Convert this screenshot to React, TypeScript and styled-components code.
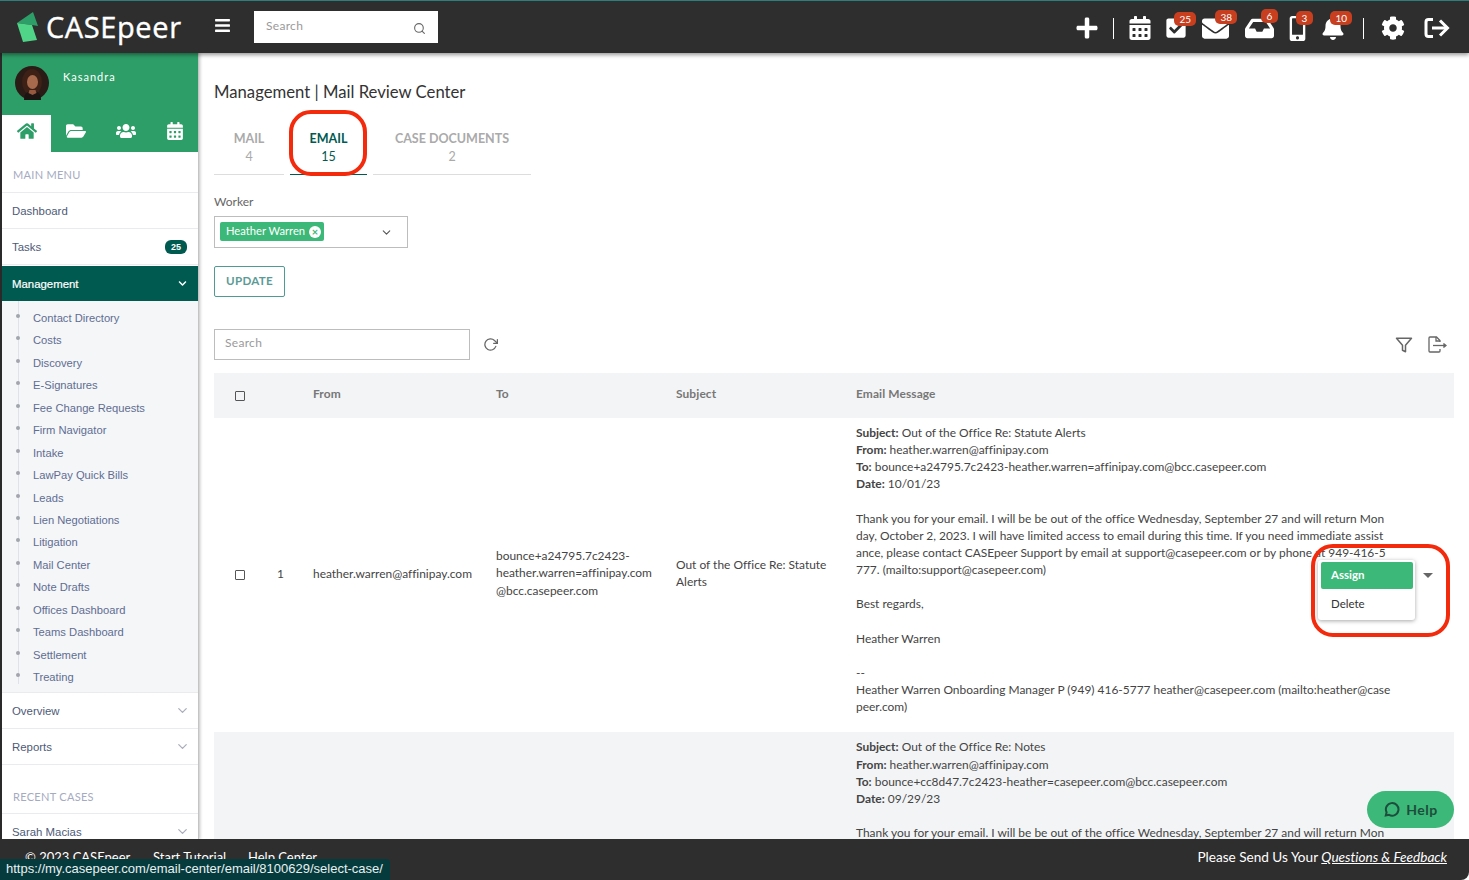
import React from 'react';
import styled, { createGlobalStyle } from 'styled-components';
import {
  FaBars,
  FaBell,
  FaCalendarAlt,
  FaCheckSquare,
  FaChevronDown,
  FaCog,
  FaEnvelope,
  FaFolderOpen,
  FaHome,
  FaInbox,
  FaMobileAlt,
  FaPlus,
  FaUsers,
} from 'react-icons/fa';
import { FiChevronDown, FiFilter, FiRotateCw, FiSearch } from 'react-icons/fi';

const GlobalStyle = createGlobalStyle`
  html, body {
    margin: 0;
    height: 100%;
    overflow: hidden;
    background: #fff;
  }
  * { box-sizing: border-box; }
`;

const BODY_FONT = "Lato, 'Noto Sans', sans-serif";
const MENU_FONT = "'Liberation Sans', Arial, sans-serif";

const Page = styled.div`
  position: relative;
  width: 1469px;
  height: 880px;
  display: flex;
  flex-direction: column;
  overflow: hidden;
  font-family: ${BODY_FONT};
  font-variant-ligatures: none;
  color: #333;
`;

const TopBar = styled.header`
  flex: 0 0 53px;
  display: flex;
  align-items: center;
  background: #2e2e2e;
  border-top: 1px solid #2c7f7c;
  box-shadow: 0 2px 4px rgba(0, 0, 0, 0.4);
  position: relative;
  z-index: 3;
  padding-right: 10px;
`;

const Brand = styled.div`
  display: flex;
  align-items: center;
  width: 214px;
  padding-left: 16px;
`;

const BrandName = styled.span`
  margin: -2px 0 0 6px;
  color: #fff;
  font-size: 29px;
  letter-spacing: 0.6px;
  font-weight: 400;
  font-family: 'Open Sans', sans-serif;
  -webkit-text-stroke: 0.4px #fff;
`;

const MenuToggle = styled.div`
  width: 40px;
  display: flex;
  color: #fff;
  font-size: 17px;
  margin-top: -4px;
`;

const TopSearch = styled.div`
  width: 184px;
  height: 32px;
  background: #fff;
  display: flex;
  align-items: center;
  justify-content: space-between;
  padding: 0 12px 4px;
  font-size: 12px;
  color: #9a9a9a;
  letter-spacing: 0.3px;

  svg {
    color: #666;
    font-size: 13px;
    margin-top: 7px;
  }
`;

const TopIcons = styled.nav`
  margin-left: auto;
  display: flex;
  align-items: center;
  height: 100%;
`;

const IconSlot = styled.div<{ $w: number; $size: number }>`
  position: relative;
  width: ${({ $w }) => $w}px;
  display: flex;
  justify-content: center;
  color: #fff;
  font-size: ${({ $size }) => $size}px;
  margin-top: 2px;
`;

const TopDivider = styled.div`
  width: 1px;
  height: 21px;
  background: #fff;
`;

const Badge = styled.span<{ $right: number }>`
  position: absolute;
  top: -5px;
  right: ${({ $right }) => $right}px;
  min-width: 17px;
  height: 14px;
  padding: 0 5px;
  border-radius: 5px;
  background: #c83f20;
  color: #fff;
  font-size: 10px;
  line-height: 14px;
  text-align: center;
`;

const Body = styled.div`
  flex: 1;
  display: flex;
  min-height: 0;
`;

const Sidebar = styled.aside`
  flex: 0 0 199px;
  border-left: 2px solid #2a2a2a;
  border-right: 1px solid #c4c4c4;
  box-shadow: 1px 0 3px rgba(0, 0, 0, 0.25);
  background: #fff;
  display: flex;
  flex-direction: column;
  overflow: hidden;
  position: relative;
  z-index: 2;

  & > * {
    flex-shrink: 0;
  }
`;

const Profile = styled.div`
  background: #2e9e68;
  height: 62px;
  display: flex;
  padding: 13px 0 0 13px;
`;

const ProfileName = styled.span`
  margin: 4px 0 0 14px;
  color: #fff;
  font-size: 11px;
  letter-spacing: 1px;
`;

const SideTabs = styled.div`
  display: grid;
  grid-template-columns: 49px 49px 52px 1fr;
  height: 37px;
  background: #2e9e68;
`;

const SideTab = styled.div<{ $active?: boolean; $size?: number }>`
  display: flex;
  align-items: center;
  justify-content: center;
  padding-bottom: 6px;
  font-size: ${({ $size }) => $size ?? 20}px;
  color: ${({ $active }) => ($active ? '#2e9e68' : '#fff')};
  background: ${({ $active }) => ($active ? '#fff' : 'transparent')};
`;

const SectionTitle = styled.div<{ $top: number; $h: number }>`
  padding: ${({ $top }) => $top}px 0 0 11px;
  height: ${({ $h }) => $h}px;
  font-size: 11px;
  letter-spacing: 0.3px;
  color: #a4abc0;
  border-bottom: 1px solid #e9ebee;
`;

const MenuRow = styled.div`
  height: 36px;
  display: flex;
  align-items: center;
  justify-content: space-between;
  padding: 0 11px 0 10px;
  font-family: ${MENU_FONT};
  font-size: 11.4px;
  color: #4d5a78;
  border-bottom: 1px solid #e9ebee;

  svg {
    color: #a9aebb;
    font-size: 15px;
    margin-right: -3px;
  }
`;

const TaskCount = styled.span`
  background: #005a50;
  color: #fff;
  border-radius: 6px;
  padding: 0 6px;
  height: 14px;
  line-height: 14px;
  font-size: 9px;
  font-weight: 700;
`;

const ActiveRow = styled.div`
  height: 35px;
  margin-top: 1px;
  position: relative;
  background: #005a50;
  color: #fff;
  display: flex;
  align-items: center;
  justify-content: space-between;
  padding: 0 11px 0 10px;
  font-family: ${MENU_FONT};
  font-size: 11.4px;
  -webkit-text-stroke: 0.2px #fff;

  svg {
    font-size: 9px;
  }

  &::after {
    content: '';
    position: absolute;
    left: 11px;
    bottom: -5px;
    border-left: 5px solid transparent;
    border-right: 5px solid transparent;
    border-top: 5px solid #2e9e68;
  }
`;

const SubMenu = styled.ul`
  list-style: none;
  margin: 0;
  padding: 6px 0 5px;
  height: 392px;
  background: #f5f6f8;
  border-bottom: 1px solid #e9ebee;
  position: relative;

  &::before {
    content: '';
    position: absolute;
    left: 16px;
    top: 0;
    bottom: 8px;
    width: 1px;
    background: #dfe2ea;
  }
`;

const SubItem = styled.li`
  position: relative;
  height: 22.45px;
  line-height: 22.45px;
  padding-left: 31px;
  font-family: ${MENU_FONT};
  font-size: 11.2px;
  color: #606d92;

  &::before {
    content: '';
    position: absolute;
    left: 14px;
    top: 7px;
    width: 4px;
    height: 4px;
    border-radius: 50%;
    background: #a2a5ad;
  }
`;

const Main = styled.main`
  flex: 1;
  min-width: 0;
  padding: 0 15px;
  overflow: hidden;
  background: #fff;
`;

const PageTitle = styled.h1`
  margin: 29px 0 0;
  font-size: 16.7px;
  line-height: 20px;
  font-weight: 400;
  color: #333;
`;

const Tabs = styled.div`
  display: flex;
  gap: 6px;
  margin-top: 18px;
`;

const Tab = styled.div<{ $w: number; $active?: boolean }>`
  width: ${({ $w }) => $w}px;
  height: 55px;
  padding-top: 10px;
  text-align: center;
  font-size: 12.5px;
  line-height: 18px;
  color: ${({ $active }) => ($active ? '#005a50' : '#aaa')};
  border-bottom: 1px solid ${({ $active }) => ($active ? '#005a50' : '#ddd')};

  b {
    display: block;
    font-weight: 700;
  }
`;

const FieldLabel = styled.label`
  display: block;
  margin-top: 19px;
  font-size: 12px;
  line-height: 15px;
  color: #666;
`;

const SelectBox = styled.div`
  margin-top: 7px;
  width: 194px;
  height: 32px;
  border: 1px solid #bdbdbd;
  display: flex;
  align-items: center;
  justify-content: space-between;
  padding: 0 14px 0 5px;
  color: #555;
  font-size: 13px;
`;

const Chip = styled.span`
  display: inline-flex;
  align-items: center;
  gap: 4px;
  height: 19px;
  width: 104px;
  padding: 0 0 2px 6px;
  margin-top: -1px;
  background: #3cb878;
  border-radius: 2px;
  color: #fff;
  font-size: 11.2px;
`;

const ChipClose = styled.span`
  width: 12px;
  height: 12px;
  margin-top: 2px;
  border-radius: 50%;
  background: #fff;
  color: #3cb878;
  font-size: 11px;
  font-weight: 700;
  line-height: 11px;
  text-align: center;
`;

const UpdateButton = styled.button`
  display: block;
  margin-top: 18px;
  width: 71px;
  height: 31px;
  padding: 0 0 2px;
  border: 1px solid #4f9a94;
  border-radius: 2px;
  background: #fff;
  color: #5b9b96;
  font-family: ${BODY_FONT};
  font-size: 11.6px;
  font-weight: 700;
  letter-spacing: 0.3px;
`;

const Toolbar = styled.div`
  display: flex;
  align-items: center;
  margin-top: 32px;
  height: 31px;
  color: #666;
`;

const SearchBox = styled.div`
  width: 256px;
  height: 31px;
  border: 1px solid #bdbdbd;
  padding: 0 10px;
  line-height: 26px;
  font-size: 12px;
  letter-spacing: 0.3px;
  color: #9a9a9a;
`;

const RefreshIcon = styled(FiRotateCw)`
  margin-left: 13px;
  font-size: 15px;
`;

const ToolIcons = styled.div`
  margin-left: auto;
  display: flex;
  align-items: center;
  gap: 15px;
  padding-right: 7px;
  font-size: 18px;
`;

const Row = styled.div<{ $shade?: boolean }>`
  position: relative;
  display: grid;
  grid-template-columns: 52px 47px 183px 180px 180px 1fr;
  align-items: center;
  background: ${({ $shade }) => ($shade ? '#f3f4f6' : '#fff')};
  font-size: 11.95px;
`;

const HeadRow = styled(Row)`
  margin-top: 13px;
  height: 45px;
  background: #f3f4f6;
`;

const HeadLabel = styled.span`
  margin-bottom: 5px;
  color: #777;
  font-weight: 700;
  letter-spacing: 0.1px;
`;

const CheckCell = styled.div`
  display: flex;
  justify-content: center;
`;

const Check = styled.span`
  width: 10px;
  height: 10px;
  border: 1px solid #555;
  border-radius: 1px;
`;

const Cell = styled.div<{ $lh?: number }>`
  margin-bottom: 4px;
  line-height: ${({ $lh }) => $lh ?? 17}px;
  color: #444;
`;

const IndexCell = styled(Cell)`
  padding-left: 11px;
`;

const Message = styled.div`
  padding: 6px 0 17px;
  line-height: 17.14px;
  white-space: pre;
  color: #444;

  b {
    font-weight: 700;
  }
`;

const ActionMenu = styled.div`
  position: absolute;
  left: 1104px;
  top: 142px;
  width: 97px;
  height: 60px;
  padding: 2px 2px 0 3px;
  background: #fff;
  border-radius: 3px;
  box-shadow: 0 1px 4px rgba(0, 0, 0, 0.35);
`;

const MenuAssign = styled.div`
  height: 27px;
  padding-left: 10px;
  line-height: 26px;
  background: #3cb878;
  border-radius: 2px;
  color: #fff;
  font-weight: 700;
  font-size: 11.5px;
`;

const MenuDelete = styled.div`
  padding: 8px 0 0 10px;
  font-size: 11.5px;
  color: #333;
`;

const ActionCaret = styled.span`
  position: absolute;
  left: 1209px;
  top: 155px;
  border-left: 5px solid transparent;
  border-right: 5px solid transparent;
  border-top: 5px solid #666;
`;

const Footer = styled.footer`
  flex: 0 0 41px;
  background: #2e2e2e;
  color: #fff;
  display: flex;
  align-items: flex-start;
  padding: 10px 22px 0 25px;
  font-size: 13px;
  line-height: 16px;
  border-bottom-right-radius: 8px;
  position: relative;
  z-index: 3;
`;

const FooterLink = styled.span<{ $w: number }>`
  width: ${({ $w }) => $w}px;
`;

const Feedback = styled.span`
  margin-left: auto;
  font-size: 13.6px;

  a {
    color: #fff;
    font-style: italic;
    text-decoration: underline;
  }
`;

const StatusUrl = styled.div`
  position: absolute;
  left: 0;
  bottom: 0;
  z-index: 5;
  width: 390px;
  height: 21px;
  padding-left: 6px;
  background: #063b3e;
  border-top-right-radius: 4px;
  color: #e8f0f0;
  font-family: ${MENU_FONT};
  font-size: 13px;
  line-height: 20px;
  white-space: nowrap;
`;

const HelpButton = styled.div`
  position: absolute;
  left: 1367px;
  top: 791px;
  z-index: 2;
  width: 87px;
  height: 37px;
  border-radius: 19px;
  background: #3cb878;
  color: #1d4d3c;
  display: flex;
  align-items: center;
  justify-content: center;
  gap: 6px;
  font-size: 14px;
  font-weight: 700;
  letter-spacing: 0.5px;
`;

const Callout = styled.div<{ $x: number; $y: number; $w: number; $h: number }>`
  position: absolute;
  left: ${({ $x }) => $x}px;
  top: ${({ $y }) => $y}px;
  width: ${({ $w }) => $w}px;
  height: ${({ $h }) => $h}px;
  border: 4px solid #f32a0c;
  border-radius: 22px;
  z-index: 4;
`;

const Logo = () => (
  <svg width="24" height="32" viewBox="0 0 24 32">
    <polygon points="1,12 17,1 22,15 16,14" fill="#2e9e68" />
    <polygon points="1,12 16,14 21,29 7,31" fill="#4fd488" />
  </svg>
);

const Avatar = () => (
  <svg width="34" height="34" viewBox="0 0 34 34">
    <circle cx="17" cy="17" r="17" fill="#2a1b17" />
    <ellipse cx="17" cy="16" rx="10" ry="13" fill="#3d2016" />
    <ellipse cx="17.5" cy="16" rx="5.5" ry="7" fill="#a86a4c" />
    <path d="M9 34c0-7 4-9 8.500-9s8.500 2 8.500 9z" fill="#1a1412" />
    <path d="M14.500 24h6l1 3-4 2-4-2z" fill="#94593e" />
  </svg>
);

const SignOut = () => (
  <svg width="27" height="24" viewBox="0 0 27 24" fill="none" stroke="#fff" strokeWidth="3">
    <path d="M9 3.500H4.500a2.500 2.500 0 0 0-2.500 2.500v12a2.500 2.500 0 0 0 2.500 2.500H9" />
    <path d="M8 12h14" />
    <path d="M16 4.500l7.500 7.500-7.500 7.500" />
  </svg>
);

const ExportFile = () => (
  <svg width="19" height="17" viewBox="0 0 19 17" fill="none" stroke="#666" strokeWidth="1.300">
    <path d="M12 6V4.500L8.500 1H2a1 1 0 0 0-1 1v13a1 1 0 0 0 1 1h9a1 1 0 0 0 1-1v-2" />
    <path d="M8 1v4h4" />
    <path d="M5 9.500h12" />
    <path d="M15.500 7.500l2.500 2-2.500 2" fill="#666" />
  </svg>
);

const HelpBubble = () => (
  <svg width="17" height="17" viewBox="0 0 17 17" fill="none" stroke="#1d4d3c" strokeWidth="2">
    <path d="M2.800 14.500l.8-3.200A6.300 6.300 0 1 1 6 13.800z" />
  </svg>
);

const subMenu = [
  'Contact Directory',
  'Costs',
  'Discovery',
  'E-Signatures',
  'Fee Change Requests',
  'Firm Navigator',
  'Intake',
  'LawPay Quick Bills',
  'Leads',
  'Lien Negotiations',
  'Litigation',
  'Mail Center',
  'Note Drafts',
  'Offices Dashboard',
  'Teams Dashboard',
  'Settlement',
  'Treating',
];

const topIcons = [
  { w: 32, size: 24, icon: <FaPlus /> },
  { w: 20, size: 24, icon: <TopDivider /> },
  { w: 34, size: 24, icon: <FaCalendarAlt /> },
  { w: 38, size: 22, icon: <FaCheckSquare />, badge: '25', right: -1 },
  { w: 40, size: 27, icon: <FaEnvelope />, badge: '38', right: -2 },
  { w: 48, size: 29, icon: <FaInbox />, badge: '6', right: 5 },
  { w: 28, size: 25, icon: <FaMobileAlt />, badge: '3', right: -2 },
  { w: 44, size: 24, icon: <FaBell />, badge: '10', right: 3 },
  { w: 16, size: 24, icon: <TopDivider /> },
  { w: 44, size: 24, icon: <FaCog /> },
  { w: 44, size: 24, icon: <SignOut /> },
];

const App: React.FC = () => (
  <Page>
    <GlobalStyle />
    <TopBar>
      <Brand>
        <Logo />
        <BrandName>CASEpeer</BrandName>
      </Brand>
      <MenuToggle>
        <FaBars />
      </MenuToggle>
      <TopSearch>
        Search
        <FiSearch />
      </TopSearch>
      <TopIcons>
        {topIcons.map((item, i) => (
          <IconSlot key={i} $w={item.w} $size={item.size}>
            {item.icon}
            {item.badge && <Badge $right={item.right}>{item.badge}</Badge>}
          </IconSlot>
        ))}
      </TopIcons>
    </TopBar>

    <Body>
      <Sidebar>
        <Profile>
          <Avatar />
          <ProfileName>Kasandra</ProfileName>
        </Profile>
        <SideTabs>
          <SideTab $active>
            <FaHome />
          </SideTab>
          <SideTab>
            <FaFolderOpen />
          </SideTab>
          <SideTab>
            <FaUsers />
          </SideTab>
          <SideTab $size={18}>
            <FaCalendarAlt />
          </SideTab>
        </SideTabs>
        <SectionTitle $top={16} $h={41}>MAIN MENU</SectionTitle>
        <MenuRow>Dashboard</MenuRow>
        <MenuRow>
          Tasks
          <TaskCount>25</TaskCount>
        </MenuRow>
        <ActiveRow>
          Management
          <FaChevronDown />
        </ActiveRow>
        <SubMenu>
          {subMenu.map((label) => (
            <SubItem key={label}>{label}</SubItem>
          ))}
        </SubMenu>
        <MenuRow>
          Overview
          <FiChevronDown />
        </MenuRow>
        <MenuRow>
          Reports
          <FiChevronDown />
        </MenuRow>
        <SectionTitle $top={25} $h={49}>RECENT CASES</SectionTitle>
        <MenuRow>
          Sarah Macias
          <FiChevronDown />
        </MenuRow>
      </Sidebar>

      <Main>
        <PageTitle>Management | Mail Review Center</PageTitle>
        <Tabs>
          <Tab $w={70}>
            <b>MAIL</b>4
          </Tab>
          <Tab $w={77} $active>
            <b>EMAIL</b>15
          </Tab>
          <Tab $w={158}>
            <b>CASE DOCUMENTS</b>2
          </Tab>
        </Tabs>
        <FieldLabel>Worker</FieldLabel>
        <SelectBox>
          <Chip>
            Heather Warren
            <ChipClose>×</ChipClose>
          </Chip>
          <FiChevronDown />
        </SelectBox>
        <UpdateButton>UPDATE</UpdateButton>
        <Toolbar>
          <SearchBox>Search</SearchBox>
          <RefreshIcon />
          <ToolIcons>
            <FiFilter />
            <ExportFile />
          </ToolIcons>
        </Toolbar>

        <HeadRow>
          <CheckCell>
            <Check />
          </CheckCell>
          <span />
          <HeadLabel>From</HeadLabel>
          <HeadLabel>To</HeadLabel>
          <HeadLabel>Subject</HeadLabel>
          <HeadLabel>Email Message</HeadLabel>
        </HeadRow>

        <Row>
          <CheckCell>
            <Check />
          </CheckCell>
          <IndexCell>1</IndexCell>
          <Cell>heather.warren@affinipay.com</Cell>
          <Cell $lh={17.5}>
            bounce+a24795.7c2423-
            <br />
            heather.warren=affinipay.com
            <br />
            @bcc.casepeer.com
          </Cell>
          <Cell>
            Out of the Office Re: Statute
            <br />
            Alerts
          </Cell>
          <Message>
            <b>Subject:</b> Out of the Office Re: Statute Alerts{'\n'}
            <b>From:</b> heather.warren@affinipay.com{'\n'}
            <b>To:</b> bounce+a24795.7c2423-heather.warren=affinipay.com@bcc.casepeer.com{'\n'}
            <b>Date:</b> 10/01/23{'\n\n'}
            Thank you for your email. I will be be out of the office Wednesday, September 27 and will return Mon{'\n'}
            day, October 2, 2023. I will have limited access to email during this time. If you need immediate assist{'\n'}
            ance, please contact CASEpeer Support by email at support@casepeer.com or by phone at 949-416-5{'\n'}
            777. (mailto:support@casepeer.com){'\n\n'}
            Best regards,{'\n\n'}
            Heather Warren{'\n\n'}
            --{'\n'}
            Heather Warren Onboarding Manager P (949) 416-5777 heather@casepeer.com (mailto:heather@case{'\n'}
            peer.com)
          </Message>
          <ActionMenu>
            <MenuAssign>Assign</MenuAssign>
            <MenuDelete>Delete</MenuDelete>
          </ActionMenu>
          <ActionCaret />
        </Row>

        <Row $shade>
          <span />
          <span />
          <span />
          <span />
          <span />
          <Message>
            <b>Subject:</b> Out of the Office Re: Notes{'\n'}
            <b>From:</b> heather.warren@affinipay.com{'\n'}
            <b>To:</b> bounce+cc8d47.7c2423-heather=casepeer.com@bcc.casepeer.com{'\n'}
            <b>Date:</b> 09/29/23{'\n\n'}
            Thank you for your email. I will be be out of the office Wednesday, September 27 and will return Mon
          </Message>
        </Row>
      </Main>
    </Body>

    <Footer>
      <FooterLink $w={128}>© 2023 CASEpeer</FooterLink>
      <FooterLink $w={95}>Start Tutorial</FooterLink>
      <FooterLink $w={80}>Help Center</FooterLink>
      <Feedback>
        Please Send Us Your <a>Questions &amp; Feedback</a>
      </Feedback>
    </Footer>

    <HelpButton>
      <HelpBubble />
      Help
    </HelpButton>
    <Callout $x={289} $y={110} $w={78} $h={66} />
    <Callout $x={1311} $y={544} $w={139} $h={93} />
    <StatusUrl>https://my.casepeer.com/email-center/email/8100629/select-case/</StatusUrl>
  </Page>
);

export default App;
